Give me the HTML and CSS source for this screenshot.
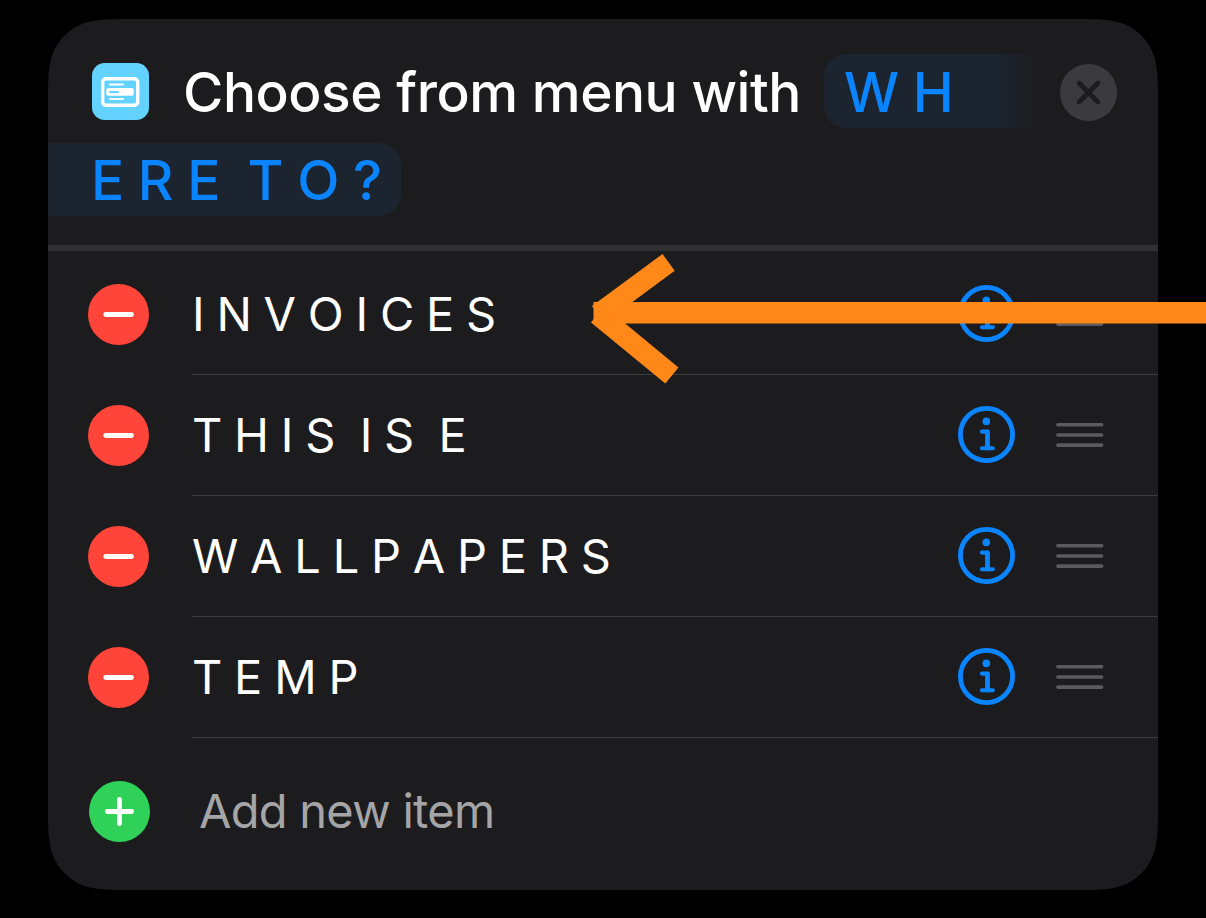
FILE: index.html
```html
<!DOCTYPE html>
<html lang="en">
<head>
    <meta charset="UTF-8">
    <meta name="viewport" content="width=device-width, initial-scale=1.0">
    <title>Choose from menu</title>
    <link rel="stylesheet" href="styles.css">
</head>
<body>

    <!-- Shapes shared by the rows -->
    <svg class="defs" width="0" height="0">
        <symbol id="minus" viewBox="0 0 61 61">
            <circle cx="30.5" cy="30.5" r="30.5" fill="#ff453a"/>
            <path d="M17.7 30.5H43.5" stroke="#fff" stroke-width="4.8" stroke-linecap="round"/>
        </symbol>
        <symbol id="info" viewBox="0 0 57 57">
            <circle cx="28.5" cy="28.5" r="26.1" fill="none" stroke="#0a84ff" stroke-width="4.8"/>
            <circle cx="28.3" cy="15.4" r="3.8" fill="#0a84ff"/>
            <path d="M23.9 25.6H29.5M23.9 42.3H34.9" fill="none" stroke="#0a84ff" stroke-width="4.1" stroke-linecap="round"/>
            <path d="M29.5 26V42" stroke="#0a84ff" stroke-width="4.8" stroke-linecap="round"/>
        </symbol>
        <symbol id="handle" viewBox="0 0 48 26">
            <path d="M1.9 2.8H45.7M1.9 13H45.7M1.9 23.1H45.7" stroke="#5b5a5f" stroke-width="3.6" stroke-linecap="round"/>
        </symbol>
    </svg>

    <div class="card">
        <div class="card-header">
            <div class="title-line">
                <svg class="app-icon" viewBox="0 0 57 57">
                    <rect width="57" height="57" rx="12.5" fill="#64d2ff"/>
                    <rect x="10.7" y="15.7" width="35" height="26.6" rx="3.4" fill="none" stroke="#fff" stroke-width="3.4"/>
                    <path d="M18 21.5H31M18 36H31" stroke="#fff" stroke-width="2.2" stroke-linecap="round"/>
                    <rect x="14.3" y="25" width="27.5" height="7.8" rx="2" fill="#fff"/>
                    <path d="M18 29H26" stroke="#64d2ff" stroke-width="2" stroke-linecap="round"/>
                </svg>
                <span class="title">Choose from menu with</span>
                <span class="pill pill-start">W H</span>
                <svg class="close-icon" viewBox="0 0 57 57">
                    <circle cx="28.5" cy="28.5" r="28.5" fill="#3b3a3f"/>
                    <path d="M19 19L38 38M38 19L19 38" stroke="#1c1c1e" stroke-width="4.6" stroke-linecap="round"/>
                </svg>
            </div>
            <div class="title-line">
                <span class="pill pill-end">E R E  T O ?</span>
            </div>
        </div>

        <div class="menu-list">
            <div class="menu-row">
                <svg class="round-icon"><use href="#minus"/></svg>
                <div class="row-body">
                    <span class="row-text">I N V O I C E S</span>
                    <svg class="info-icon"><use href="#info"/></svg>
                    <svg class="handle-icon"><use href="#handle"/></svg>
                </div>
            </div>
            <div class="menu-row">
                <svg class="round-icon"><use href="#minus"/></svg>
                <div class="row-body">
                    <span class="row-text">T H I S  I S  E</span>
                    <svg class="info-icon"><use href="#info"/></svg>
                    <svg class="handle-icon"><use href="#handle"/></svg>
                </div>
            </div>
            <div class="menu-row">
                <svg class="round-icon"><use href="#minus"/></svg>
                <div class="row-body">
                    <span class="row-text">W A L L P A P E R S</span>
                    <svg class="info-icon"><use href="#info"/></svg>
                    <svg class="handle-icon"><use href="#handle"/></svg>
                </div>
            </div>
            <div class="menu-row">
                <svg class="round-icon"><use href="#minus"/></svg>
                <div class="row-body">
                    <span class="row-text">T E M P</span>
                    <svg class="info-icon"><use href="#info"/></svg>
                    <svg class="handle-icon"><use href="#handle"/></svg>
                </div>
            </div>
            <div class="add-row">
                <svg class="round-icon" viewBox="0 0 61 61">
                    <circle cx="30.5" cy="30.5" r="30.5" fill="#30d158"/>
                    <path d="M18.3 30.5H42.7M30.5 18.3V42.7" stroke="#fff" stroke-width="4.8" stroke-linecap="round"/>
                </svg>
                <span class="add-text">Add new item</span>
            </div>
        </div>
    </div>

    <!-- Arrow pointing at the first item -->
    <svg class="arrow" viewBox="0 0 616 130">
        <path d="M3.5 52H616V73.6H3.5Z" fill="#ff8819"/>
        <path d="M72.5 4L84.7 20.7L14 73L2 56Z" fill="#ff8819"/>
        <path d="M88.5 117.5L75.3 133.5L1 72.5L14 56Z" fill="#ff8819"/>
    </svg>

</body>
</html>
```
FILE: styles.css
```css
body {
    font-family: Inter, "Liberation Sans", sans-serif;
    background-color: #000;
    margin: 0;
    padding: 19px 48px 28px;
    height: 871px;
    overflow: hidden;
}
.defs {
    display: block;
}
.card {
    width: 1110px;
    height: 871px;
    background-color: #1c1c1e;
    /* smooth corners */
    clip-path: path("M87 0H1023C1048 0 1060.5 0 1074 4.3C1088.7 9.6 1100.4 21.3 1105.7 36C1110 49.5 1110 62 1110 87V784C1110 809 1110 821.5 1105.7 835C1100.4 849.7 1088.7 861.4 1074 866.7C1060.5 871 1048 871 1023 871H87C62 871 49.5 871 36 866.7C21.3 861.4 9.6 849.7 4.3 835C0 821.5 0 809 0 784V87C0 62 0 49.5 4.3 36C9.6 21.3 21.3 9.6 36 4.3C49.5 0 62 0 87 0Z");
}

/* Header */
.card-header {
    box-sizing: border-box;
    height: 232px;
    padding-top: 35px;
    border-bottom: 6px solid #2f2f34;
    display: flex;
    flex-direction: column;
    gap: 15px;
    font-size: 55px;
    font-weight: 500;
}
.title-line {
    display: flex;
    align-items: center;
    height: 73.5px;
}
.app-icon {
    width: 57px;
    height: 57px;
    margin: 2px 0 0 44px;
    flex-shrink: 0;
}
.title {
    width: 641px;
    margin-left: 34px;
    padding-top: 2px;
    color: #fff;
    letter-spacing: -0.46px;
    white-space: nowrap;
    flex-shrink: 0;
}
.pill {
    box-sizing: border-box;
    height: 73.5px;
    line-height: 76px;
    color: #0a84ff;
    background-color: #1c242f;
    word-spacing: -1px;
    white-space: pre;
}
.pill-start {
    width: 214px;
    padding-left: 20px;
    border-radius: 22px 0 0 22px;
    background: linear-gradient(to right, #1c242f 82%, #1c1c1e 100%);
}
.pill-end {
    width: 353px;
    padding-left: 43px;
    line-height: 74px;
    border-radius: 0 22px 22px 0;
}
.close-icon {
    width: 57px;
    height: 57px;
    margin: 4px 0 0 22px;
}

/* Items */
.menu-list {
    padding-top: 3px;
    font-size: 47px;
    letter-spacing: -0.72px;
}
.menu-row {
    display: flex;
    align-items: center;
    height: 121px;
    padding-left: 40px;
}
.round-icon {
    width: 61px;
    height: 61px;
    flex-shrink: 0;
}
.row-body {
    box-sizing: border-box;
    flex: 1;
    height: 121px;
    margin-left: 43px;
    border-bottom: 1px solid #3d3d40;
    display: flex;
    align-items: center;
}
.row-text {
    flex: 1;
    padding-bottom: 2px;
    color: #fff;
    white-space: pre;
}
.info-icon {
    width: 57px;
    height: 57px;
    margin: 0 41px 2px 0;
}
.handle-icon {
    width: 48px;
    height: 26px;
    margin-right: 54px;
}
.add-row {
    display: flex;
    align-items: center;
    height: 147px;
    padding-left: 41px;
}
.add-text {
    margin-left: 49px;
    padding-bottom: 2px;
    color: #a5a5a7;
}

/* Arrow over the card */
.arrow {
    position: absolute;
    left: 590px;
    top: 250px;
    width: 616px;
    height: 130px;
    overflow: visible;
}
```
